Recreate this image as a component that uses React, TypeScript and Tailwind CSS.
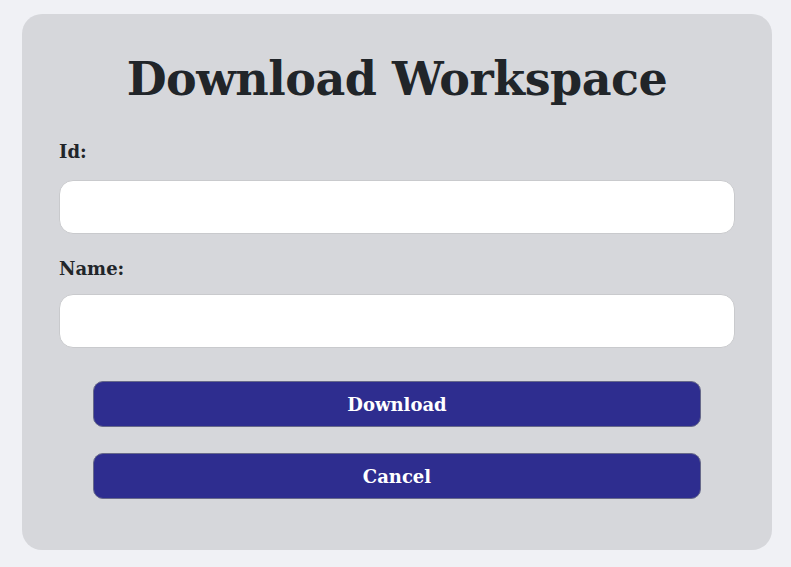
import React from 'react';

const font = { fontFamily: '"DejaVu Serif", "Liberation Serif", serif' };

export default function App() {
  return (
    <div className="min-h-[567px] w-full bg-[#f0f1f5] px-[22px] pt-[14px]" style={font}>
      <div className="w-[750px] h-[536px] rounded-[20px] bg-[#d6d7db] px-[37px] pt-[34px] text-[#212529]">
        <h1 className="text-center font-bold text-[46px] leading-[62px] tracking-[-0.5px]">Download Workspace</h1>
        <div className="mt-[32px] flex flex-col">
          <label className="font-bold text-[18px] leading-[20px]">Id:</label>
          <input className="mt-[18px] h-[54px] rounded-[14px] border border-[#c9cacd] bg-white px-3 outline-none" />
          <label className="mt-[25px] font-bold text-[18px] leading-[20px]">Name:</label>
          <input className="mt-[15px] h-[54px] rounded-[14px] border border-[#c9cacd] bg-white px-3 outline-none" />
          <div className="mt-[33px] mx-[34px] flex flex-col gap-[26px]">
            <button className="h-[46px] rounded-[10px] border border-[#67698a] bg-[#2e2d8f] text-white font-bold text-[18px]">Download</button>
            <button className="h-[46px] rounded-[10px] border border-[#67698a] bg-[#2e2d8f] text-white font-bold text-[18px]">Cancel</button>
          </div>
        </div>
      </div>
    </div>
  );
}
